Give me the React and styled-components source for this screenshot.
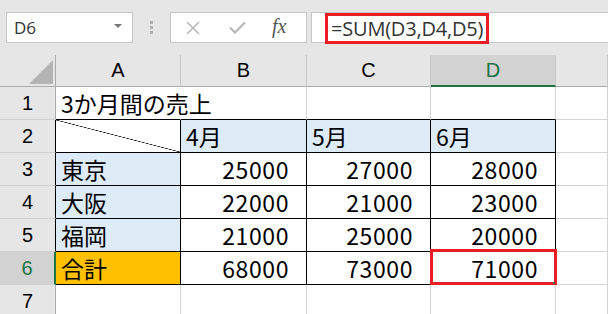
import styled, { createGlobalStyle } from 'styled-components';

const GlobalStyle = createGlobalStyle`
  body {
    margin: 0;
    background: #fff;
    overflow: hidden;
  }
`;

const GREEN = '#217346';
const GRID = '#d4d4d4';
const BLACK = '#000';

const Page = styled.div`
  width: 608px;
  height: 314px;
  overflow: hidden;
  background: #fff;
`;

const TopBar = styled.div`
  height: 55px;
  box-sizing: border-box;
  padding-top: 12px;
  background: #e6e6e6;
  display: flex;
  align-items: flex-start;
`;

const NameBox = styled.div`
  margin-left: 6px;
  width: 127px;
  height: 31px;
  box-sizing: border-box;
  border: 1px solid #c6c6c6;
  background: #fff;
  display: flex;
  align-items: center;
  justify-content: space-between;
  padding: 0 10px 0 7px;
  font-family: "Open Sans", sans-serif;
  font-size: 17px;
  color: #333;
`;

const DropArrow = styled.span`
  width: 0;
  height: 0;
  border-left: 4px solid transparent;
  border-right: 4px solid transparent;
  border-top: 4px solid #777;
  margin-top: -4px;
`;

const Grip = styled.div`
  margin: 9px 0 0 17px;
  display: flex;
  flex-direction: column;
  gap: 2px;
`;

const GripDot = styled.span`
  width: 3px;
  height: 3px;
  background: #b0b0b0;
`;

const FxBox = styled.div`
  margin-left: 17px;
  width: 137px;
  height: 31px;
  box-sizing: border-box;
  border: 1px solid #c6c6c6;
  background: #fff;
  display: flex;
  align-items: center;
  padding-left: 15px;
  gap: 29px;
`;

const Fx = styled.span`
  font-family: "Liberation Serif", serif;
  font-style: italic;
  font-size: 20px;
  color: #555;
  margin-left: -3px;
  margin-top: -2px;
`;

const FormulaInput = styled.div`
  margin-left: 4px;
  flex: 1;
  height: 31px;
  box-sizing: border-box;
  border: 1px solid #c6c6c6;
  border-right: none;
  background: #fff;
  display: flex;
  align-items: center;
  padding-left: 13px;
`;

const Highlight = styled.div`
  border: 3px solid #ea1c24;
  height: 31px;
  box-sizing: border-box;
  margin-top: 1px;
  padding: 0 3px 0 3px;
  display: flex;
  align-items: center;
  font-family: "Open Sans", sans-serif;
  font-size: 20px;
  color: #333;
  letter-spacing: -0.2px;
`;

const Sheet = styled.div`
  display: grid;
  grid-template-columns: 56px 125px 126px 124px 125px 52px;
  grid-template-rows: 32px repeat(7, 33px);
`;

const Corner = styled.div`
  background: #e6e6e6;
  border-right: 1px solid #ababab;
  border-bottom: 1px solid #ababab;
  box-sizing: border-box;
  display: flex;
  align-items: flex-end;
  justify-content: flex-end;
  padding: 0 2px 2px 0;
`;

const CornerTriangle = styled.span`
  width: 24px;
  height: 24px;
  background: #b4b4b4;
  clip-path: polygon(100% 0, 100% 100%, 0 100%);
`;

const ColHead = styled.div`
  box-sizing: border-box;
  background: ${(p) => (p.$active ? '#d2d2d2' : '#e6e6e6')};
  border-right: 1px solid #c8c8c8;
  border-bottom: ${(p) => (p.$active ? `2px solid ${GREEN}` : '1px solid #ababab')};
  color: ${(p) => (p.$active ? GREEN : '#000')};
  font-family: "Liberation Sans", Arial, sans-serif;
  font-size: 20px;
  display: flex;
  align-items: center;
  justify-content: center;
  padding-top: ${(p) => (p.$active ? '1px' : '0')};
`;

const RowHead = styled.div`
  box-sizing: border-box;
  background: ${(p) => (p.$active ? '#d2d2d2' : '#e6e6e6')};
  border-bottom: 1px solid #d0d0d0;
  border-right: ${(p) => (p.$active ? `2px solid ${GREEN}` : `1px solid ${p.$edge || '#ababab'}`)};
  color: ${(p) => (p.$active ? GREEN : '#000')};
  font-family: "Liberation Sans", Arial, sans-serif;
  font-size: 20px;
  display: flex;
  align-items: center;
  justify-content: center;
`;

const Cell = styled.div`
  position: relative;
  box-sizing: border-box;
  border-right: 1px solid ${(p) => p.$r || GRID};
  border-bottom: 1px solid ${(p) => p.$b || GRID};
  background: ${(p) => p.$bg || 'transparent'};
  font-family: "Noto Sans CJK JP", sans-serif;
  font-size: 23px;
  color: #000;
  display: flex;
  align-items: center;
  justify-content: ${(p) => (p.$num ? 'flex-end' : 'flex-start')};
  padding: ${(p) => (p.$num ? '0 17px 0 0' : '0 0 0 5px')};
  white-space: nowrap;
  letter-spacing: ${(p) => (p.$num ? '0.6px' : '0')};
  line-height: 1;
`;

const DiagonalCell = styled(Cell)`
  background: linear-gradient(
    to top right,
    transparent calc(50% - 0.6px),
    #000 50%,
    transparent calc(50% + 0.6px)
  );
`;

const SelectedCell = styled(Cell)`
  &::after {
    content: '';
    position: absolute;
    top: -3px;
    left: -1px;
    right: -2px;
    bottom: -1px;
    border: 3px solid #ea1c24;
    z-index: 2;
  }
  &::before {
    content: '';
    position: absolute;
    right: 0;
    bottom: 0;
    width: 2px;
    height: 2px;
    background: ${GREEN};
    z-index: 3;
  }
`;

const XIcon = () => (
  <svg width="14" height="14" viewBox="0 0 14 14">
    <path d="M1 1 L13 13 M13 1 L1 13" stroke="#b8b8b8" strokeWidth="1.6" fill="none" />
  </svg>
);

const CheckIcon = () => (
  <svg width="17" height="13" viewBox="0 0 17 13">
    <path d="M1 6.5 L6 11.5 L16 1.5" stroke="#b8b8b8" strokeWidth="2.2" fill="none" />
  </svg>
);

const cities = [
  ['東京', 25000, 27000, 28000],
  ['大阪', 22000, 21000, 23000],
  ['福岡', 21000, 25000, 20000],
];

const App = () => {
  return (
    <Page>
      <GlobalStyle />
      <TopBar>
        <NameBox>
          D6
          <DropArrow />
        </NameBox>
        <Grip>
          <GripDot />
          <GripDot />
          <GripDot />
        </Grip>
        <FxBox>
          <XIcon />
          <CheckIcon />
          <Fx>fx</Fx>
        </FxBox>
        <FormulaInput>
          <Highlight>=SUM(D3,D4,D5)</Highlight>
        </FormulaInput>
      </TopBar>

      <Sheet>
        <Corner>
          <CornerTriangle />
        </Corner>
        <ColHead>A</ColHead>
        <ColHead>B</ColHead>
        <ColHead>C</ColHead>
        <ColHead $active>D</ColHead>
        <ColHead />

        <RowHead>1</RowHead>
        <Cell $r="transparent" $b={BLACK}>3か月間の売上</Cell>
        <Cell $b={BLACK} />
        <Cell $b={BLACK} />
        <Cell $b={BLACK} />
        <Cell />

        <RowHead $edge={BLACK}>2</RowHead>
        <DiagonalCell $r={BLACK} $b={BLACK} />
        <Cell $r={BLACK} $b={BLACK} $bg="#ddebf7">4月</Cell>
        <Cell $r={BLACK} $b={BLACK} $bg="#ddebf7">5月</Cell>
        <Cell $r={BLACK} $b={BLACK} $bg="#ddebf7">6月</Cell>
        <Cell />

        {cities.map((row, i) => [
          <RowHead key={`h${i}`} $edge={BLACK}>{i + 3}</RowHead>,
          <Cell key={`a${i}`} $r={BLACK} $b={BLACK} $bg="#ddebf7">{row[0]}</Cell>,
          ...row.slice(1).map((v, j) => (
            <Cell key={`v${i}${j}`} $r={BLACK} $b={BLACK} $num>{v}</Cell>
          )),
          <Cell key={`e${i}`} />,
        ])}

        <RowHead $active>6</RowHead>
        <Cell $r={BLACK} $b={BLACK} $bg="#ffc000">合計</Cell>
        <Cell $r={BLACK} $b={BLACK} $num>68000</Cell>
        <Cell $r={BLACK} $b={BLACK} $num>73000</Cell>
        <SelectedCell $r={BLACK} $b={BLACK} $num>71000</SelectedCell>
        <Cell />

        <RowHead>7</RowHead>
        <Cell />
        <Cell />
        <Cell />
        <Cell />
        <Cell />
      </Sheet>
    </Page>
  );
};

export default App;
